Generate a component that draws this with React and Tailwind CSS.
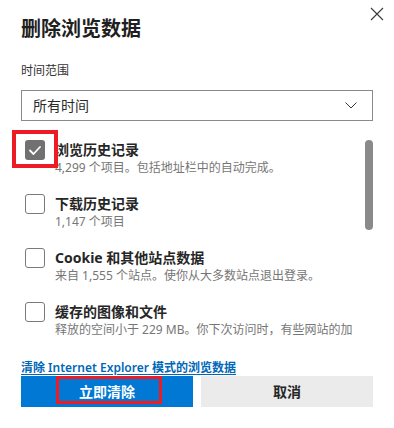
import { useState } from 'react';

const items = [
  { title: '浏览历史记录', desc: '4,299 个项目。包括地址栏中的自动完成。', checked: true },
  { title: '下载历史记录', desc: '1,147 个项目', checked: false },
  { title: 'Cookie 和其他站点数据', desc: '来自 1,555 个站点。使你从大多数站点退出登录。', checked: false },
  {
    title: '缓存的图像和文件',
    desc: '释放的空间小于 229 MB。你下次访问时，有些网站的加载速度可能会更慢。',
    checked: false,
  },
];

function Checkbox({ checked, onToggle }) {
  if (checked) {
    return (
      <button
        type="button"
        onClick={onToggle}
        className="flex h-[20px] w-[20px] shrink-0 items-center justify-center rounded-[3px] bg-[#717171]"
      >
        <svg width="20" height="20" viewBox="0 0 20 20" fill="none">
          <path d="M5 10.5 L8.5 14 L15 7" stroke="white" strokeWidth="1.8" strokeLinecap="round" strokeLinejoin="round" />
        </svg>
      </button>
    );
  }
  return (
    <button
      type="button"
      onClick={onToggle}
      className="h-[20px] w-[20px] shrink-0 rounded-[3px] border border-[#7a7a7a] bg-white"
    />
  );
}

export default function App() {
  const [checked, setChecked] = useState(items.map((item) => item.checked));

  return (
    <div
      className="relative h-[428px] w-[394px] overflow-hidden bg-white text-[#262626]"
      style={{ fontFamily: '"Noto Sans", "Noto Sans CJK SC", sans-serif' }}
    >
      <button type="button" className="absolute left-[370px] top-[7px] text-[#3a3a3a]">
        <svg width="14" height="14" viewBox="0 0 14 14" fill="none">
          <path d="M1 1 L13 13 M13 1 L1 13" stroke="currentColor" strokeWidth="1.1" />
        </svg>
      </button>

      <div className="px-[21px] pt-[15px]">
        <h2 className="text-[20px] font-bold leading-[28px] text-[#1f1f1f]">删除浏览数据</h2>

        <p className="mt-[20px] text-[12px] leading-[16px] text-[#333333]">时间范围</p>

        <div className="mt-[11px] flex h-[31px] items-center justify-between border-[1.5px] border-[#8a8a8a] pl-[11px] pr-[15px]">
          <span className="text-[14px] text-[#2b2b2b]">所有时间</span>
          <svg width="12" height="7" viewBox="0 0 12 7" fill="none">
            <path d="M0.5 0.5 L6 6 L11.5 0.5" stroke="#3a3a3a" strokeWidth="1" />
          </svg>
        </div>

        <div className="mt-[19px] flex h-[197px] gap-[8px] overflow-hidden pl-[4px]">
          <div className="flex-1 overflow-hidden">
            {items.map((item, i) => (
              <div key={item.title} className="flex h-[54px] gap-[10px]">
                <Checkbox
                  checked={checked[i]}
                  onToggle={() => setChecked(checked.map((c, j) => (j === i ? !c : c)))}
                />
                <div className="min-w-0">
                  <p className="text-[14px] font-bold leading-[20px] text-[#262626]">{item.title}</p>
                  <p className="text-[12px] leading-[16px] text-[#767676]">{item.desc}</p>
                </div>
              </div>
            ))}
          </div>
          <div className="w-[8px] shrink-0">
            <div className="h-[90px] w-[8px] rounded-full bg-[#8a8a8a]" />
          </div>
        </div>

        <a href="#" className="mt-[23px] block text-[12px] font-semibold leading-[16px] text-[#0067b8] underline underline-offset-2">
          清除 Internet Explorer 模式的浏览数据
        </a>

        <div className="flex gap-[8px]">
          <button
            type="button"
            className="flex h-[31px] flex-1 items-center justify-center bg-[#0078d4] text-[14px] font-bold text-white underline underline-offset-4"
          >
            立即清除
          </button>
          <button
            type="button"
            className="flex h-[31px] flex-1 items-center justify-center bg-[#ebebeb] text-[14px] font-bold text-[#262626]"
          >
            取消
          </button>
        </div>
      </div>

      <div className="pointer-events-none absolute left-[12px] top-[130px] h-[38px] w-[46px] border-4 border-[#ed1c24]" />
      <div className="pointer-events-none absolute left-[56px] top-[376px] h-[28px] w-[106px] border-[3px] border-[#ed1c24]" />
    </div>
  );
}
